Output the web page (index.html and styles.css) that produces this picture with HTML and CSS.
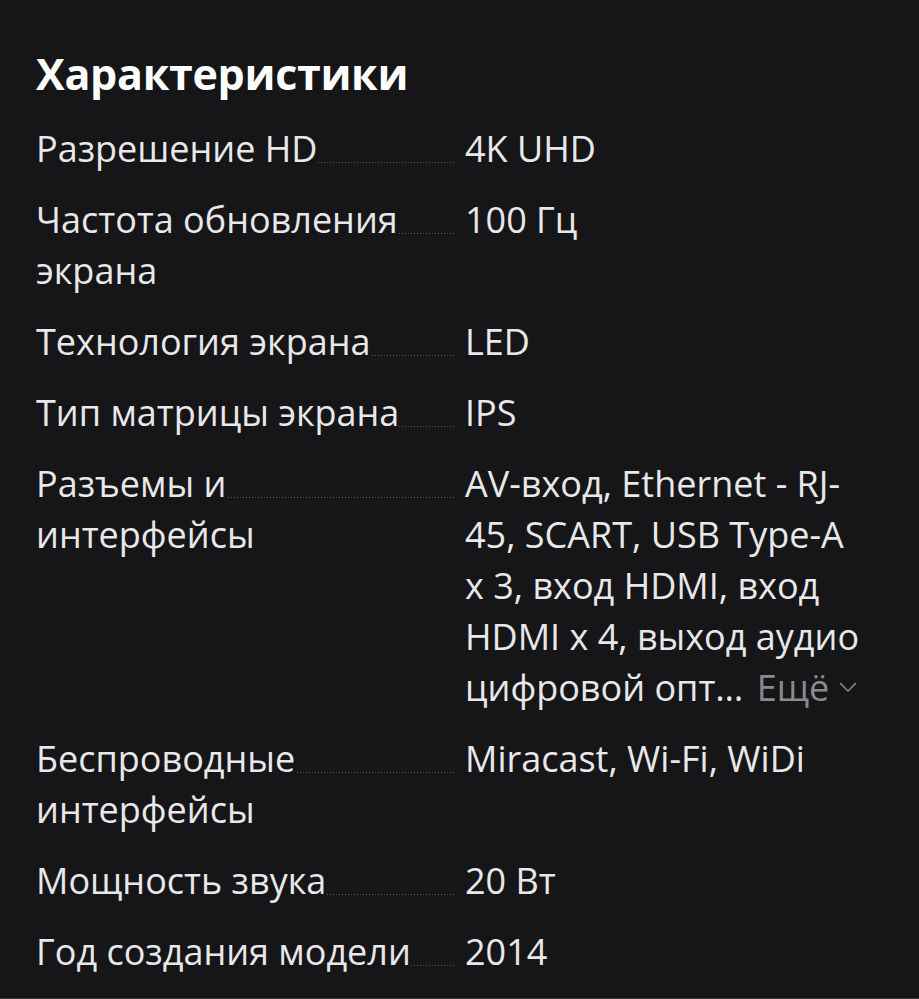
FILE: index.html
```html
<!DOCTYPE html>
<html lang="ru">
<head>
<meta charset="utf-8">
<link rel="stylesheet" href="styles.css">
</head>
<body>
<section class="specs">
  <h2 class="specs-title">Характеристики</h2>
  <dl class="specs-list">
    <div class="spec-row">
      <dt class="spec-name"><span class="spec-text">Разрешение HD</span></dt>
      <dd class="spec-value">4K UHD</dd>
    </div>
    <div class="spec-row">
      <dt class="spec-name"><span class="spec-text">Частота обновления экрана</span></dt>
      <dd class="spec-value">100 Гц</dd>
    </div>
    <div class="spec-row">
      <dt class="spec-name"><span class="spec-text">Технология экрана</span></dt>
      <dd class="spec-value">LED</dd>
    </div>
    <div class="spec-row">
      <dt class="spec-name"><span class="spec-text">Тип матрицы экрана</span></dt>
      <dd class="spec-value">IPS</dd>
    </div>
    <div class="spec-row">
      <dt class="spec-name"><span class="spec-text">Разъемы и интерфейсы</span></dt>
      <dd class="spec-value">AV-вход, Ethernet - RJ-<wbr>45, SCART, USB Type-A x&nbsp;3, вход HDMI, вход HDMI x&nbsp;4, выход аудио цифровой опт… <span class="more">Ещё<svg class="chev" viewBox="0 0 18 10" width="18" height="10"><path d="M1 1l8 8 8-8" fill="none" stroke="currentColor" stroke-width="1.5"/></svg></span></dd>
    </div>
    <div class="spec-row">
      <dt class="spec-name"><span class="spec-text">Беспроводные интерфейсы</span></dt>
      <dd class="spec-value">Miracast, Wi-Fi, WiDi</dd>
    </div>
    <div class="spec-row">
      <dt class="spec-name"><span class="spec-text">Мощность звука</span></dt>
      <dd class="spec-value">20 Вт</dd>
    </div>
    <div class="spec-row">
      <dt class="spec-name"><span class="spec-text">Год создания модели</span></dt>
      <dd class="spec-value">2014</dd>
    </div>
  </dl>
</section>
</body>
</html>
```
FILE: styles.css
```css
html, body {
  margin: 0;
  background: #161618;
  height: 100%;
}
body {
  font-family: "Open Sans", "Noto Sans", sans-serif;
  color: #e8e8ea;
}
.specs {
  padding: 44px 36px 0 36px;
  height: 999px;
  box-sizing: border-box;
  border-bottom: 1px solid #3a3a3c;
}
.specs-title {
  margin: 0 0 19px 0;
  font-size: 43px;
  line-height: 60px;
  font-weight: 700;
  color: #ffffff;
  letter-spacing: -0.3px;
}
.specs-list {
  margin: 0;
  display: flex;
  flex-direction: column;
  gap: 20px;
}
.spec-row {
  display: grid;
  grid-template-columns: 419px 1fr;
  column-gap: 10px;
  font-size: 36px;
  line-height: 51px;
}
.spec-name {
  margin: 0;
  position: relative;
  padding-right: 28px;
}
.spec-name::before {
  content: "";
  position: absolute;
  left: 0;
  right: 0;
  top: 39px;
  height: 1px;
  background-image: linear-gradient(to right, #5c5c60 1px, transparent 1px);
  background-size: 3px 1px;
  background-repeat: repeat-x;
}
.spec-text {
  position: relative;
  background: #161618;
}
.spec-value {
  margin: 0;
}
.more {
  color: #8a8a8e;
  margin-left: 4px;
  white-space: nowrap;
}
.chev {
  vertical-align: middle;
  margin-left: 10px;
  position: relative;
  top: -4px;
}
```
